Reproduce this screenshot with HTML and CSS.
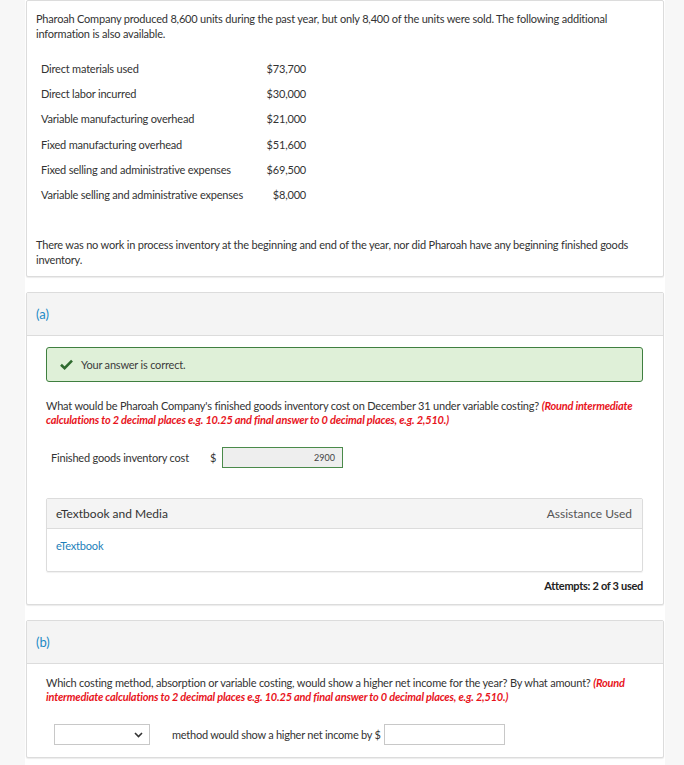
FILE: index.html
```html
<!DOCTYPE html>
<html>
<head>
<meta charset="utf-8">
<link rel="stylesheet" href="styles.css">
</head>
<body>
<div class="page">
  <div class="card intro">
    <p class="para">Pharoah Company produced 8,600 units during the past year, but only 8,400 of the units were sold. The following additional information is also available.</p>
    <div class="data">
      <div class="lbl">Direct materials used</div><div class="val">$73,700</div>
      <div class="lbl">Direct labor incurred</div><div class="val">$30,000</div>
      <div class="lbl">Variable manufacturing overhead</div><div class="val">$21,000</div>
      <div class="lbl">Fixed manufacturing overhead</div><div class="val">$51,600</div>
      <div class="lbl">Fixed selling and administrative expenses</div><div class="val">$69,500</div>
      <div class="lbl">Variable selling and administrative expenses</div><div class="val">$8,000</div>
    </div>
    <p class="para after">There was no work in process inventory at the beginning and end of the year, nor did Pharoah have any beginning finished goods inventory.</p>
  </div>

  <div class="card part">
    <div class="part-head">(a)</div>
    <div class="part-body">
      <div class="correct">
        <svg class="check" width="13" height="11" viewBox="0 0 13 11"><path d="M1 5.8 L4.6 9.2 L12 1.6" fill="none" stroke="#2f6b2f" stroke-width="2.6"/></svg>
        <span>Your answer is correct.</span>
      </div>
      <p class="question">What would be Pharoah Company's finished goods inventory cost on December 31 under variable costing? <em class="hint">(Round intermediate calculations to 2 decimal places e.g. 10.25 and final answer to 0 decimal places, e.g. 2,510.)</em></p>
      <div class="answer-row">
        <span class="ans-label">Finished goods inventory cost</span>
        <span class="dollar">$</span>
        <span class="ans-input filled">2900</span>
      </div>
      <div class="media">
        <div class="media-head"><span>eTextbook and Media</span><span class="assist">Assistance Used</span></div>
        <div class="media-body"><span class="link">eTextbook</span></div>
      </div>
      <div class="attempts">Attempts: 2 of 3 used</div>
    </div>
  </div>

  <div class="card part partb">
    <div class="part-head">(b)</div>
    <div class="part-body">
      <p class="question qb">Which costing method, absorption or variable costing, would show a higher net income for the year? By what amount? <em class="hint">(Round intermediate calculations to 2 decimal places e.g. 10.25 and final answer to 0 decimal places, e.g. 2,510.)</em></p>
      <div class="select-row">
        <span class="select"><svg width="9" height="6" viewBox="0 0 9 6"><path d="M1 1 L4.5 4.5 L8 1" fill="none" stroke="#333" stroke-width="1.6"/></svg></span>
        <span class="sel-text">method would show a higher net income by $</span>
        <span class="ans-input empty"></span>
      </div>
    </div>
  </div>
</div>
</body>
</html>
```

FILE: styles.css
```css
html, body {
  margin: 0;
  padding: 0;
}
body {
  background: #f7f7f7;
  font-family: Lato, "Open Sans", sans-serif;
  color: #333;
  font-size: 11px;
  letter-spacing: -0.2px;
}
.page {
  margin-left: 25px;
  width: 640px;
  background: #fff;
  min-height: 765px;
  padding-top: 0;
}
.card {
  box-sizing: border-box;
  background: #fff;
  border: 1px solid #dcdcdc;
  border-radius: 2px;
  box-shadow: 0 1px 1px rgba(0,0,0,0.08);
  margin-left: 1px;
  width: 638px;
}
.intro {
  padding: 10px 9px 9px 9px;
}
.para {
  margin: 0;
  line-height: 15px;
}
.para.after {
  margin-top: 30px;
}
.data {
  display: grid;
  grid-template-columns: 210px 55px;
  grid-auto-rows: 25.2px;
  align-items: center;
  margin-top: 15px;
  padding-left: 5px;
}
.val {
  text-align: right;
}
.part {
  margin-top: 15px;
}
.part-head {
  background: #f4f4f4;
  height: 42px;
  border-bottom: 1px solid #dcdcdc;
  display: flex;
  align-items: center;
  padding-left: 9px;
  color: #1d8ac6;
  font-size: 13px;
  letter-spacing: 0;
}
.part-body {
  padding: 11px 20px 12px 19px;
}
.correct {
  background: #dff0d8;
  border: 1px solid #3f7f3f;
  border-radius: 3px;
  height: 33px;
  display: flex;
  align-items: center;
  padding-left: 13px;
  gap: 8px;
  color: #3c3c3c;
}
.check {
  display: block;
}
.question {
  margin: 17px 0 0 0;
  line-height: 14px;
}
.hint {
  color: #e8141c;
  font-weight: bold;
  font-style: italic;
}
.answer-row {
  display: flex;
  align-items: center;
  margin-top: 20px;
  padding-left: 5px;
  height: 21px;
}
.ans-label {
  width: 159px;
}
.dollar {
  width: 12px;
}
.ans-input {
  display: block;
  box-sizing: border-box;
  width: 121px;
  height: 21px;
  font-size: 9px;
  letter-spacing: 0;
  text-align: right;
  line-height: 19px;
  padding-right: 7px;
}
.ans-input.filled {
  background: #eeeeee;
  border: 1px solid #4a8a4a;
  color: #444;
}
.ans-input.empty {
  border: 1px solid #c8c8c8;
  background: #fff;
}
.media {
  margin-top: 30px;
  border: 1px solid #dcdcdc;
  border-radius: 2px;
  box-shadow: 0 1px 1px rgba(0,0,0,0.06);
}
.media-head {
  background: #f4f4f4;
  height: 29px;
  border-bottom: 1px solid #dcdcdc;
  display: flex;
  align-items: center;
  justify-content: space-between;
  padding: 0 10px 0 9px;
  font-size: 12px;
  letter-spacing: 0;
  color: #333;
}
.assist {
  color: #555;
}
.media-body {
  box-sizing: border-box;
  height: 42px;
  padding: 10px 0 0 9px;
  line-height: 14px;
}
.link {
  color: #1d7fba;
  font-size: 11px;
}
.attempts {
  text-align: right;
  margin-top: 7px;
  font-weight: bold;
  color: #222;
  letter-spacing: -0.3px;
  font-size: 11px;
}
.qb {
  margin-top: 1px;
}
.select-row {
  display: flex;
  align-items: center;
  margin-top: 20px;
  padding-left: 8px;
  height: 21px;
}
.select {
  box-sizing: border-box;
  width: 96px;
  height: 21px;
  border: 1px solid #c8c8c8;
  background: #fff;
  display: flex;
  align-items: center;
  justify-content: flex-end;
  padding-right: 6px;
}
.select svg {
  display: block;
}
.sel-text {
  margin-left: 22px;
  margin-right: 3px;
  letter-spacing: -0.25px;
}
```
